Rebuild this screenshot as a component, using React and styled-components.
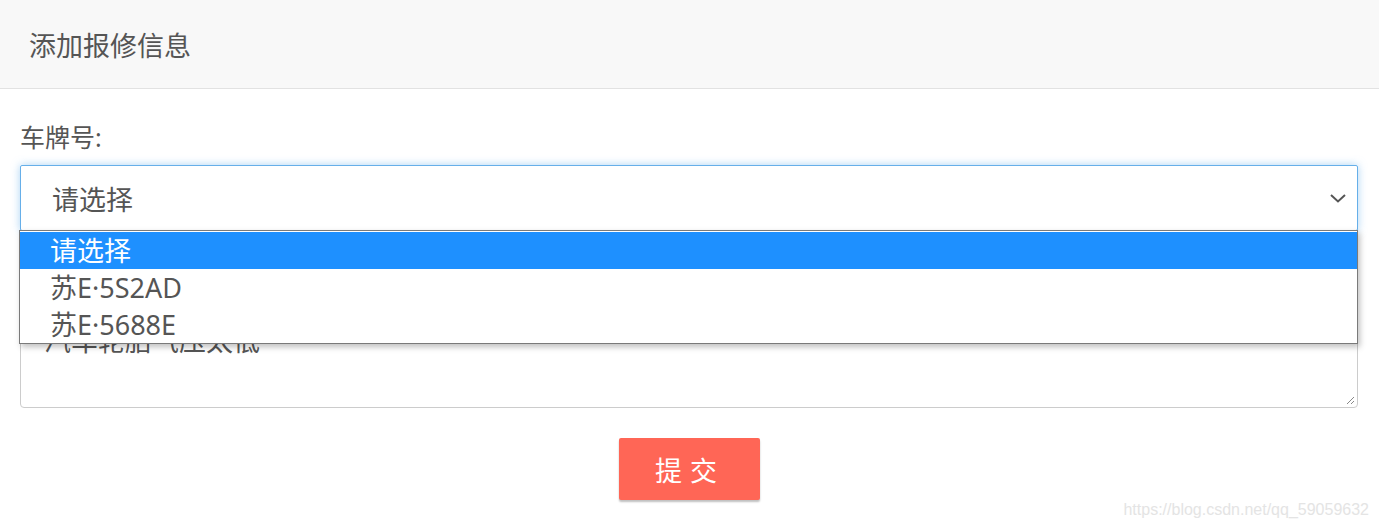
import React from "react";
import styled, { createGlobalStyle } from "styled-components";

const GlobalStyle = createGlobalStyle`
  body {
    margin: 0;
    background: #fff;
    font-family: "Noto Sans", "Noto Sans CJK SC", sans-serif;
    color: #555;
  }
`;

const Page = styled.div`
  width: 1379px;
  height: 526px;
  position: relative;
  overflow: hidden;
`;

const Header = styled.div`
  height: 88px;
  background: #f8f8f8;
  border-bottom: 1px solid #e2e2e2;
  display: flex;
  align-items: center;
  padding-left: 29px;
`;

const Title = styled.h1`
  margin: 0;
  font-size: 27px;
  font-weight: normal;
  color: #555;
`;

const Form = styled.form`
  padding: 20px 21px 0 20px;
`;

const Label = styled.label`
  display: block;
  height: 32px;
  line-height: 32px;
  font-size: 25px;
  margin: ${({ $top }) => $top}px 0 12px;
  color: #555;
`;

const SelectWrap = styled.div`
  position: relative;
`;

const SelectBox = styled.div`
  height: 64px;
  border: 1px solid #66afe9;
  border-radius: 2px;
  box-shadow: 0 0 8px rgba(102, 175, 233, 0.55);
  display: flex;
  align-items: center;
  justify-content: space-between;
  padding: 0 9px 0 31px;
  font-size: 27px;
  color: #555;
`;

const Dropdown = styled.ul`
  position: absolute;
  left: -1px;
  right: 0;
  top: 65px;
  margin: 0;
  padding: 1px 0 0;
  list-style: none;
  background: #fff;
  border: 1px solid #7a7a7a;
  box-shadow: 2px 3px 6px rgba(0, 0, 0, 0.25);
  z-index: 2;
`;

const Option = styled.li`
  height: 37px;
  line-height: 37px;
  padding-left: 30px;
  font-size: 27px;
  background: ${({ $active }) => ($active ? "#1e90ff" : "#fff")};
  color: ${({ $active }) => ($active ? "#fff" : "#555")};
`;

const TextArea = styled.div`
  height: 104px;
  border: 1px solid #ccc;
  border-radius: 4px;
  padding: 16px 23px;
  box-sizing: border-box;
  font-size: 27px;
  line-height: 40px;
  color: #555;
  position: relative;
`;

const Grip = styled.svg`
  position: absolute;
  right: 2px;
  bottom: 2px;
`;

const Actions = styled.div`
  display: flex;
  justify-content: center;
  padding-top: 30px;
`;

const SubmitButton = styled.button`
  width: 141px;
  height: 62px;
  border: none;
  border-radius: 2px;
  background: #ff6656;
  color: #fff;
  font-family: inherit;
  font-size: 27px;
  letter-spacing: 8px;
  padding-left: 8px;
  box-shadow: 0 2px 2px rgba(0, 0, 0, 0.25);
`;

const Watermark = styled.div`
  position: absolute;
  right: 10px;
  bottom: 7px;
  font-family: "Liberation Sans", Arial, sans-serif;
  font-size: 16px;
  color: #e4e4e4;
`;

const Chevron = () => (
  <svg width="20" height="12" viewBox="0 0 20 12">
    <path d="M3 3 L10 9.5 L17 3" fill="none" stroke="#555" strokeWidth="2" />
  </svg>
);

const options = ["请选择", "苏E·5S2AD", "苏E·5688E"];

export default function App() {
  return (
    <Page>
      <GlobalStyle />
      <Header>
        <Title>添加报修信息</Title>
      </Header>
      <Form>
        <Label $top={12}>车牌号:</Label>
        <SelectWrap>
          <SelectBox>
            <span>请选择</span>
            <Chevron />
          </SelectBox>
          <Dropdown>
            {options.map((o, i) => (
              <Option key={i} $active={i === 0}>
                {o}
              </Option>
            ))}
          </Dropdown>
        </SelectWrap>
        <Label $top={29}>问题描述:</Label>
        <TextArea>
          汽车轮胎气压太低
          <Grip width="10" height="10" viewBox="0 0 10 10">
            <path d="M9 2 L2 9 M9 6 L6 9" stroke="#888" strokeWidth="1" />
          </Grip>
        </TextArea>
        <Actions>
          <SubmitButton type="button">提交</SubmitButton>
        </Actions>
      </Form>
      <Watermark>https://blog.csdn.net/qq_59059632</Watermark>
    </Page>
  );
}
